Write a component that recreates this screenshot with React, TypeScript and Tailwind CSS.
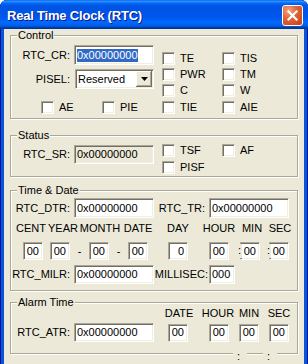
import type { ReactNode } from 'react'

const sunken =
  'border border-t-[#aca899] border-l-[#aca899] border-r-white border-b-white shadow-[inset_1px_1px_0_#716f64,inset_-1px_-1px_0_#f1efe2]'

function Edit({
  className = '',
  children,
  disabled = false,
}: {
  className?: string
  children: ReactNode
  disabled?: boolean
}) {
  return (
    <div
      className={`${sunken} ${disabled ? 'bg-[#ece9d8]' : 'bg-white'} flex items-center whitespace-nowrap pl-[2px] ${className}`}
    >
      {children}
    </div>
  )
}

function Small({ className = '', children, colon = false }: { className?: string; children: ReactNode; colon?: boolean }) {
  return (
    <div className={`relative ${className}`}>
      <div className={`${sunken} flex h-[18px] w-[20px] items-center justify-end bg-white pr-[3px]`}>{children}</div>
      {colon && (
        <span className="absolute -left-[3px] top-[2px] h-[14px] w-[5px] bg-[#ece9d8] text-center leading-[13px]">:</span>
      )}
    </div>
  )
}

function Check({ label, className = '' }: { label: string; className?: string }) {
  return (
    <div className={`flex h-[13px] items-center ${className}`}>
      <div className={`${sunken} h-[13px] w-[13px] shrink-0 bg-white`} />
      <span className="ml-[5px] whitespace-nowrap">{label}</span>
    </div>
  )
}

function Head({ className = '', children }: { className?: string; children: ReactNode }) {
  return (
    <div className={`flex w-0 justify-center ${className}`}>
      <span className="whitespace-nowrap">{children}</span>
    </div>
  )
}

function Group({ title, className = '', children }: { title: string; className?: string; children: ReactNode }) {
  return (
    <div
      className={`relative ml-[6px] w-[288px] border border-[#aca899] shadow-[inset_1px_1px_0_#fff,1px_1px_0_#fff] ${className}`}
    >
      <span className="absolute -top-[7px] left-[6px] bg-[#ece9d8] px-[1px]">{title}</span>
      {children}
    </div>
  )
}

function Combo() {
  return (
    <div className={`${sunken} ml-[5px] flex h-[20px] w-[79px] items-center bg-white`}>
      <span className="flex-1 pl-[2px]">Reserved</span>
      <div className="mr-[1px] flex h-[16px] w-[16px] items-center justify-center bg-[#ece9d8] shadow-[inset_-1px_-1px_0_#716f64,inset_1px_1px_0_#fff,inset_-2px_-2px_0_#aca899]">
        <svg width="7" height="4" viewBox="0 0 7 4">
          <path d="M0 0h7L3.5 4z" fill="#000" />
        </svg>
      </div>
    </div>
  )
}

export default function App() {
  return (
    <div className="h-[364px] w-[308px] bg-white font-['Liberation_Sans',Arial,sans-serif] text-[11px] leading-[13px] text-black">
      <div className="flex h-full flex-col overflow-hidden rounded-t-[7px] bg-[#0855dd] shadow-[inset_1px_0_0_#00138c,inset_-1px_0_0_#00138c]">
        {/* title bar */}
        <div className="flex h-[29px] shrink-0 items-start justify-between bg-[linear-gradient(180deg,#0058ee_0%,#3593ff_4%,#288eff_6%,#127dff_8%,#036ffc_10%,#0262ee_14%,#0057e5_20%,#0054e3_24%,#0055eb_56%,#005bf5_66%,#026afe_76%,#0062ef_86%,#0052d6_92%,#0040ab_94%,#003092_100%)] pl-[7px] pr-[5px]">
          <span className="mt-[8px] text-[13px] font-bold leading-[15px] tracking-[-0.2px] text-white [text-shadow:1px_1px_0_#0a1883]">
            Real Time Clock (RTC)
          </span>
          <div className="mt-[5px] flex h-[21px] w-[21px] items-center justify-center rounded-[3px] border border-white bg-[radial-gradient(circle_at_30%_25%,#f2a582_0%,#e2653a_40%,#c53d10_100%)]">
            <svg width="13" height="13" viewBox="0 0 13 13">
              <path d="M2.5 2.5l8 8M10.5 2.5l-8 8" stroke="#fff" strokeWidth="2.2" strokeLinecap="square" />
            </svg>
          </div>
        </div>

        <div className="mx-[4px] flex-1 bg-[#ece9d8] pt-[6px]">
          {/* Control */}
          <Group title="Control" className="h-[84px]">
            <div className="flex items-start">
              <div className="mt-[9px]">
                <div className="flex h-[20px] items-center">
                  <span className="w-[59px] text-right">RTC_CR:</span>
                  <Edit className="ml-[4px] h-[20px] w-[80px]">
                    <span className="bg-[#316ac5] text-white">0x00000000</span>
                  </Edit>
                </div>
                <div className="mt-[4px] flex h-[20px] items-center">
                  <span className="w-[59px] text-right">PISEL:</span>
                  <Combo />
                </div>
              </div>
              <div className="ml-[8px] mt-[16px] flex flex-col gap-[3px]">
                <div className="flex">
                  <Check label="TE" className="w-[60px]" />
                  <Check label="TIS" />
                </div>
                <div className="flex">
                  <Check label="PWR" className="w-[60px]" />
                  <Check label="TM" />
                </div>
                <div className="flex">
                  <Check label="C" className="w-[60px]" />
                  <Check label="W" />
                </div>
              </div>
            </div>
            <div className="ml-[30px] mt-[4px] flex">
              <Check label="AE" className="w-[61px]" />
              <Check label="PIE" className="w-[60px]" />
              <Check label="TIE" className="w-[60px]" />
              <Check label="AIE" />
            </div>
          </Group>

          {/* Status */}
          <Group title="Status" className="mt-[16px] h-[42px]">
            <div className="flex items-start">
              <div className="mt-[9px] flex h-[19px] items-center">
                <span className="w-[59px] text-right">RTC_SR:</span>
                <Edit disabled className="ml-[4px] h-[19px] w-[80px]">
                  0x00000000
                </Edit>
              </div>
              <div className="ml-[8px] mt-[8px] flex flex-col gap-[4px]">
                <div className="flex">
                  <Check label="TSF" className="w-[60px]" />
                  <Check label="AF" />
                </div>
                <Check label="PISF" />
              </div>
            </div>
          </Group>

          {/* Time & Date */}
          <Group title="Time & Date" className="mt-[13px] h-[101px]">
            <div className="mt-[7px] flex h-[20px] items-center">
              <span className="w-[59px] text-right">RTC_DTR:</span>
              <Edit className="ml-[4px] h-[20px] w-[80px]">0x00000000</Edit>
              <span className="w-[51px] text-right">RTC_TR:</span>
              <Edit className="ml-[4px] h-[20px] w-[80px]">0x00000000</Edit>
            </div>
            <div className="mt-[4px] flex h-[13px]">
              <Head className="ml-[20px]">CENT</Head>
              <Head className="ml-[32px]">YEAR</Head>
              <Head className="ml-[37px]">MONTH</Head>
              <Head className="ml-[38px]">DATE</Head>
              <Head className="ml-[40px]">DAY</Head>
              <Head className="ml-[41px]">HOUR</Head>
              <Head className="ml-[33px]">MIN</Head>
              <Head className="ml-[28px]">SEC</Head>
            </div>
            <div className="mt-[7px] flex h-[18px] items-center">
              <Small className="ml-[12px]">00</Small>
              <Small className="ml-[7px]">00</Small>
              <span className="w-[19px] text-center">-</span>
              <Small>00</Small>
              <span className="w-[19px] text-center">-</span>
              <Small>00</Small>
              <Small className="ml-[20px]">0</Small>
              <Small className="ml-[21px]">00</Small>
              <Small className="ml-[11px]" colon>
                00
              </Small>
              <Small className="ml-[9px]" colon>
                00
              </Small>
            </div>
            <div className="mt-[5px] flex h-[19px] items-center">
              <span className="w-[59px] text-right">RTC_MILR:</span>
              <Edit className="ml-[4px] h-[19px] w-[80px]">0x00000000</Edit>
              <span className="w-[54px] text-right">MILLISEC:</span>
              <Edit className="ml-[1px] h-[19px] w-[26px]">000</Edit>
            </div>
          </Group>

          {/* Alarm Time */}
          <Group title="Alarm Time" className="mt-[11px] h-[52px]">
            <div className="mt-[4px] flex h-[13px]">
              <Head className="ml-[168px]">DATE</Head>
              <Head className="ml-[39px]">HOUR</Head>
              <Head className="ml-[31px]">MIN</Head>
              <Head className="ml-[30px]">SEC</Head>
            </div>
            <div className="mt-[3px] flex h-[19px] items-center">
              <span className="w-[59px] text-right">RTC_ATR:</span>
              <Edit className="ml-[4px] h-[19px] w-[80px]">0x00000000</Edit>
              <Small className="ml-[14px]">00</Small>
              <Small className="ml-[21px]">00</Small>
              <Small className="ml-[10px]">00</Small>
              <Small className="ml-[10px]">00</Small>
            </div>
            {/* colon labels that sit over the frame */}
            <span className="absolute left-[222px] top-[47px] h-[14px] w-[14px] bg-[#ece9d8] pl-[4px]">:</span>
            <span className="absolute left-[252px] top-[47px] h-[14px] w-[14px] bg-[#ece9d8] pl-[4px]">:</span>
          </Group>
        </div>
      </div>
    </div>
  )
}
